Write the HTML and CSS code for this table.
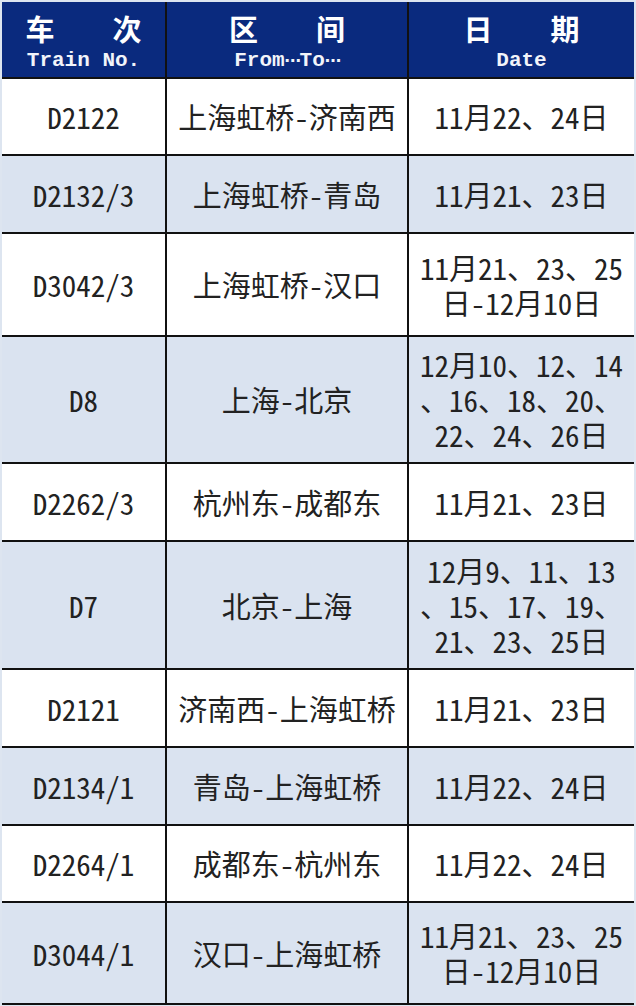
FILE: index.html
```html
<!DOCTYPE html>
<html lang="zh-CN">
<head>
<meta charset="utf-8">
<title>车次</title>
<link rel="stylesheet" href="styles.css">
</head>
<body>
<div class="sheet">
  <div class="row head">
    <div class="cell"><span class="zh">车　　次</span><span class="en">Train No.</span></div>
    <div class="cell"><span class="zh">区　　间</span><span class="en">From<span class="dots">⋯</span>To<span class="dots">⋯</span></span></div>
    <div class="cell"><span class="zh">日　　期</span><span class="en">Date</span></div>
  </div>
  <div class="row">
    <div class="cell">D2122</div><div class="cell">上海虹桥-济南西</div><div class="cell">11月22、24日</div>
  </div>
  <div class="row alt">
    <div class="cell">D2132/3</div><div class="cell">上海虹桥-青岛</div><div class="cell">11月21、23日</div>
  </div>
  <div class="row">
    <div class="cell">D3042/3</div><div class="cell">上海虹桥-汉口</div><div class="cell multi">11月21、23、25<br>日-12月10日</div>
  </div>
  <div class="row alt">
    <div class="cell">D8</div><div class="cell">上海-北京</div><div class="cell multi">12月10、12、14<br>、16、18、20、<br>22、24、26日</div>
  </div>
  <div class="row">
    <div class="cell">D2262/3</div><div class="cell">杭州东-成都东</div><div class="cell">11月21、23日</div>
  </div>
  <div class="row alt">
    <div class="cell">D7</div><div class="cell">北京-上海</div><div class="cell multi">12月9、11、13<br>、15、17、19、<br>21、23、25日</div>
  </div>
  <div class="row">
    <div class="cell">D2121</div><div class="cell">济南西-上海虹桥</div><div class="cell">11月21、23日</div>
  </div>
  <div class="row alt">
    <div class="cell">D2134/1</div><div class="cell">青岛-上海虹桥</div><div class="cell">11月22、24日</div>
  </div>
  <div class="row">
    <div class="cell">D2264/1</div><div class="cell">成都东-杭州东</div><div class="cell">11月22、24日</div>
  </div>
  <div class="row alt">
    <div class="cell">D3044/1</div><div class="cell">汉口-上海虹桥</div><div class="cell multi">11月21、23、25<br>日-12月10日</div>
  </div>
</div>
</body>
</html>
```
FILE: styles.css
```css
html, body {
  margin: 0;
  padding: 0;
  background: #dde5f0;
}
body {
  padding: 2px 2px 0 2px;
  width: 632px;
}
.sheet {
  display: grid;
  grid-template-columns: 163px 240px 225px;
  grid-template-rows: 75px 75px 76px 101px 125px 76px 126px 76px 76px 75px 100px;
  gap: 2px;
  background: #111;
  border-bottom: 2px solid #111;
  font-family: "Noto Sans CJK SC", "Noto Sans CJK JP", sans-serif;
  font-feature-settings: "hwid";
  font-size: 29px;
  color: #222;
}
.row {
  display: contents;
}
.cell {
  background: #ffffff;
  display: flex;
  flex-direction: column;
  align-items: center;
  justify-content: center;
  text-align: center;
  white-space: nowrap;
  line-height: 35px;
}
.row.alt .cell {
  background: #dae3f0;
}
.row.head .cell {
  background: #0a2a7e;
  color: #ffffff;
  justify-content: flex-start;
}
.head .zh {
  font-feature-settings: normal;
  font-weight: 700;
  font-size: 29px;
  line-height: 32px;
  margin-top: 10px;
}
.head .en {
  font-family: "Liberation Mono", monospace;
  font-weight: 700;
  font-size: 21px;
  line-height: 22px;
  margin-top: 6px;
  color: #f2f4fa;
}
.head .dots {
  font-family: "DejaVu Sans", sans-serif;
  font-size: 16px;
  letter-spacing: -1px;
}
```
